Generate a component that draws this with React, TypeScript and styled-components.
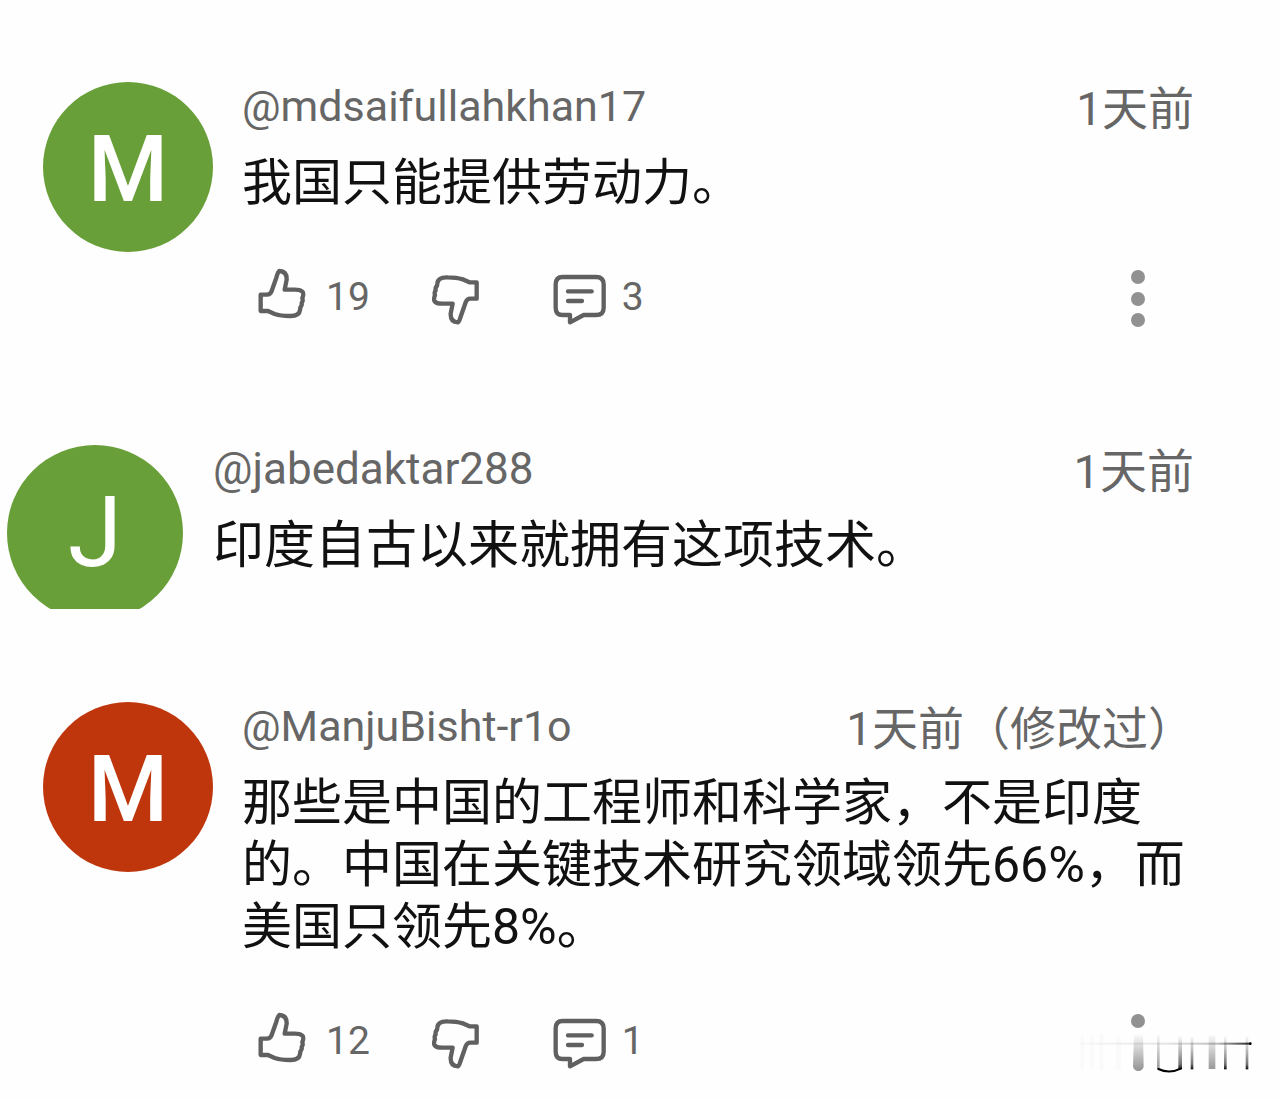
import React from "react";
import styled, { createGlobalStyle } from "styled-components";

const GlobalStyle = createGlobalStyle`
  *, *::before, *::after { box-sizing: border-box; }
  body {
    margin: 0;
    background: #fefefe;
    color: #111;
    font-family: Roboto, "Noto Sans CJK SC", sans-serif;
  }
`;

const Page = styled.main`
  display: flex;
  flex-direction: column;
  padding: 82px 0 28px;
  overflow-x: hidden;
`;

const Comment = styled.article<{ $inset: number; $gap: number; $before: number }>`
  display: flex;
  align-items: flex-start;
  gap: ${(p) => p.$gap}px;
  margin-top: ${(p) => p.$before}px;
  padding: 0 86px 0 ${(p) => p.$inset}px;
`;

const AvatarFrame = styled.div<{ $cut: boolean }>`
  flex: none;
  overflow: hidden;
  ${(p) => p.$cut && "height: 164px;"}
`;

const Avatar = styled.div<{ $color: string; $large: boolean }>`
  display: flex;
  align-items: center;
  justify-content: center;
  width: ${(p) => (p.$large ? 176 : 170)}px;
  aspect-ratio: 1;
  padding-top: ${(p) => (p.$large ? 0 : 6)}px;
  border-radius: 50%;
  background: ${(p) => p.$color};
  color: #fff;
  font-size: ${(p) => (p.$large ? 98 : 92)}px;
  font-weight: ${(p) => (p.$large ? 400 : 500)};
  line-height: 1;
`;

const Content = styled.div`
  flex: 1;
  min-width: 0;
`;

const Header = styled.header<{ $large: boolean }>`
  display: flex;
  align-items: flex-start;
  justify-content: space-between;
  height: 52px;
  color: #666;
  font-size: ${(p) => (p.$large ? 44 : 43)}px;
  line-height: 48px;
  white-space: nowrap;
`;

const Author = styled.a`
  color: inherit;
  text-decoration: none;
`;

const Time = styled.time<{ $large: boolean }>`
  font-size: ${(p) => (p.$large ? 47 : 46)}px;
  line-height: 54px;
`;

const Body = styled.p<{ $size: number }>`
  margin: 18px 0 0;
  padding-right: 4px;
  font-size: ${(p) => p.$size}px;
  line-height: 62px;
`;

const Actions = styled.div`
  position: relative;
  display: flex;
  align-items: center;
  height: 58px;
  margin-top: 54px;
  padding: 0 48px 0 16px;
`;

const Action = styled.button<{ $gap: number; $after: number }>`
  display: flex;
  align-items: center;
  gap: ${(p) => p.$gap}px;
  margin: 0 ${(p) => p.$after}px 0 0;
  padding: 0;
  border: 0;
  background: none;
  color: #666;
  font: 39px/58px Roboto, sans-serif;
  cursor: pointer;
`;

const More = styled(Action)`
  margin-left: auto;
  color: #919191;
`;

const Mark = styled.svg`
  position: absolute;
  right: -60px;
  top: 16px;
  width: 176px;
  height: 48px;
  pointer-events: none;
`;

const stroke = {
  fill: "none",
  stroke: "#606060",
  strokeWidth: 13,
  strokeLinejoin: "round" as const,
  strokeLinecap: "round" as const,
};

const THUMB =
  "M65 119V168H87L107 177Q125 183 152 183Q181 184 183 165L184 158Q190 150 188 144Q193 138 190 130Q196 113 189 109Q183 104 167 104H137L143 74Q144 49 121 48Q117 50 112 68L98 108Q94 119 84 119Z";

const LikeIcon = () => (
  <svg width="48" height="58" viewBox="57 39 144 174" aria-hidden="true">
    <path d={THUMB} {...stroke} />
  </svg>
);

const DislikeIcon = () => (
  <svg width="48" height="58" viewBox="577 39 144 174" aria-hidden="true">
    <path d={THUMB} transform="rotate(180 388 125)" {...stroke} />
  </svg>
);

const ReplyIcon = () => (
  <svg width="54" height="58" viewBox="939 39 162 174" aria-hidden="true">
    <path
      d="M968 66H1068Q1091 66 1091 88V158Q1091 180 1068 180H1031L990 202V180H968Q947 180 947 158V88Q947 66 968 66Z"
      {...stroke}
    />
    <path d="M984 109H1055M984 138H1026" {...stroke} />
  </svg>
);

const MoreIcon = ({ single }: { single: boolean }) => (
  <svg width="16" height="58" viewBox="0 0 16 58" overflow="visible" fill="currentColor" aria-hidden="true">
    <circle cx="8" cy="9" r="7" />
    {!single && <circle cx="8" cy="31" r="7" />}
    {!single && <circle cx="8" cy="52" r="7" />}
  </svg>
);

const FadedMark = () => (
  <Mark viewBox="52 84 528 144" aria-hidden="true">
    <defs>
      <linearGradient id="rule" x1="52" x2="572" y1="0" y2="0" gradientUnits="userSpaceOnUse">
        <stop offset="0" stopColor="#000" stopOpacity="0.02" />
        <stop offset="0.5" stopColor="#000" stopOpacity="0.1" />
        <stop offset="0.8" stopColor="#000" stopOpacity="0.25" />
        <stop offset="1" stopColor="#000" stopOpacity="0.85" />
      </linearGradient>
      <linearGradient id="soft" x1="0" x2="0" y1="100" y2="212" gradientUnits="userSpaceOnUse">
        <stop offset="0" stopColor="#000" stopOpacity="0" />
        <stop offset="1" stopColor="#000" stopOpacity="0.42" />
      </linearGradient>
      <linearGradient id="hard" x1="0" x2="0" y1="106" y2="208" gradientUnits="userSpaceOnUse">
        <stop offset="0" stopColor="#000" stopOpacity="0" />
        <stop offset="0.5" stopColor="#000" stopOpacity="0.3" />
        <stop offset="0.85" stopColor="#000" stopOpacity="0.55" />
        <stop offset="1" stopColor="#000" stopOpacity="0.95" />
      </linearGradient>
    </defs>
    <g fill="#000" opacity="0.012">
      <rect x="60" y="108" width="10" height="100" />
      <rect x="88" y="104" width="10" height="104" />
      <rect x="116" y="104" width="12" height="104" />
      <rect x="166" y="110" width="14" height="98" />
    </g>
    <rect x="60" y="128" width="510" height="6" fill="url(#rule)" />
    <circle cx="569" cy="131" r="4" />
    <path d="M220 100H247L249 200Q246 212 233 213Q220 212 217 200Z" fill="url(#soft)" />
    <rect x="289" y="106" width="8" height="102" fill="url(#soft)" />
    <rect x="353" y="106" width="11" height="102" fill="url(#hard)" />
    <rect x="390" y="106" width="8" height="102" fill="url(#hard)" />
    <rect x="444" y="106" width="20" height="101" fill="url(#soft)" />
    <rect x="490" y="106" width="8" height="102" fill="url(#hard)" />
    <rect x="555" y="106" width="8" height="102" fill="url(#hard)" />
    <path d="M293 207Q326 223 360 206" fill="none" stroke="#000" strokeWidth="6" strokeLinecap="round" />
  </Mark>
);

interface CommentData {
  author: string;
  initial: string;
  color: string;
  time: string;
  text: string;
  likes?: number;
  replies?: number;
  faded?: boolean;
  large?: boolean;
  before: number;
}

const comments: CommentData[] = [
  {
    author: "@mdsaifullahkhan17",
    initial: "M",
    color: "#689f38",
    time: "1天前",
    text: "我国只能提供劳动力。",
    likes: 19,
    replies: 3,
    before: 0,
  },
  {
    author: "@jabedaktar288",
    initial: "J",
    color: "#689f38",
    time: "1天前",
    text: "印度自古以来就拥有这项技术。",
    large: true,
    before: 119,
  },
  {
    author: "@ManjuBisht-r1o",
    initial: "M",
    color: "#bf360c",
    time: "1天前（修改过）",
    text: "那些是中国的工程师和科学家，不是印度的。中国在关键技术研究领域领先66%，而美国只领先8%。",
    likes: 12,
    replies: 1,
    faded: true,
    before: 93,
  },
];

export default function App() {
  return (
    <>
      <GlobalStyle />
      <Page>
        {comments.map((c) => {
          const large = Boolean(c.large);
          return (
            <Comment key={c.author} $inset={large ? 7 : 43} $gap={large ? 30 : 29} $before={c.before}>
              <AvatarFrame $cut={large}>
                <Avatar $color={c.color} $large={large}>{c.initial}</Avatar>
              </AvatarFrame>
              <Content>
                <Header $large={large}>
                  <Author href="#">{c.author}</Author>
                  <Time $large={large}>{c.time}</Time>
                </Header>
                <Body $size={large ? 51 : 50}>{c.text}</Body>
                {c.likes !== undefined && (
                  <Actions>
                    <Action $gap={20} $after={62} aria-label={`赞 ${c.likes}`}>
                      <LikeIcon />
                      {c.likes}
                    </Action>
                    <Action $gap={0} $after={73} aria-label="踩">
                      <DislikeIcon />
                    </Action>
                    <Action $gap={15} $after={0} aria-label={`回复 ${c.replies}`}>
                      <ReplyIcon />
                      {c.replies}
                    </Action>
                    <More $gap={0} $after={0} aria-label="更多">
                      <MoreIcon single={Boolean(c.faded)} />
                    </More>
                    {c.faded && <FadedMark />}
                  </Actions>
                )}
              </Content>
            </Comment>
          );
        })}
      </Page>
    </>
  );
}
